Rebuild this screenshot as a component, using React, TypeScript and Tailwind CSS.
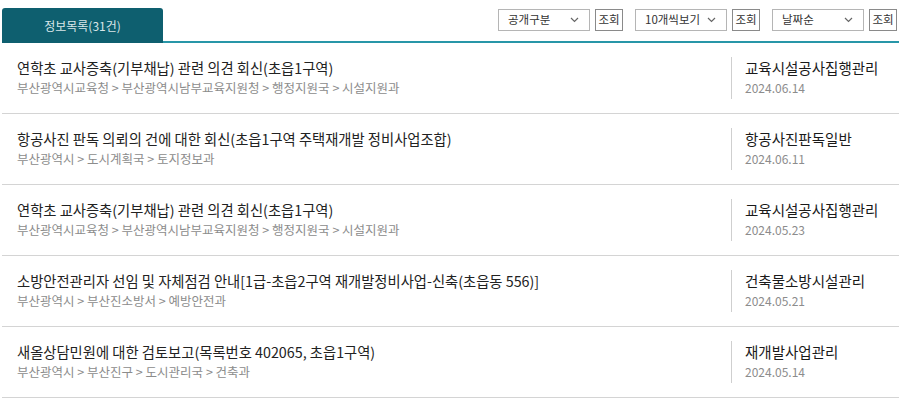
import React from "react";

const rows = [
  { t: "연학초 교사증축(기부채납) 관련 의견 회신(초읍1구역)", p: "부산광역시교육청 > 부산광역시남부교육지원청 > 행정지원국 > 시설지원과", c: "교육시설공사집행관리", d: "2024.06.14" },
  { t: "항공사진 판독 의뢰의 건에 대한 회신(초읍1구역 주택재개발 정비사업조합)", p: "부산광역시 > 도시계획국 > 토지정보과", c: "항공사진판독일반", d: "2024.06.11" },
  { t: "연학초 교사증축(기부채납) 관련 의견 회신(초읍1구역)", p: "부산광역시교육청 > 부산광역시남부교육지원청 > 행정지원국 > 시설지원과", c: "교육시설공사집행관리", d: "2024.05.23" },
  { t: "소방안전관리자 선임 및 자체점검 안내[1급-초읍2구역 재개발정비사업-신축(초읍동 556)]", p: "부산광역시 > 부산진소방서 > 예방안전과", c: "건축물소방시설관리", d: "2024.05.21" },
  { t: "새올상담민원에 대한 검토보고(목록번호 402065, 초읍1구역)", p: "부산광역시 > 부산진구 > 도시관리국 > 건축과", c: "재개발사업관리", d: "2024.05.14" },
];

function Chevron() {
  return (
    <svg width="9" height="6" viewBox="0 0 9 6" fill="none">
      <path d="M1 1l3.5 3.5L8 1" stroke="#666" strokeWidth="1.2" />
    </svg>
  );
}

function SelectGroup({ label }: { label: string }) {
  return (
    <div className="flex items-center gap-[5px]">
      <div className="w-[92px] h-[22px] border border-[#b5b5b5] flex items-center justify-between pl-[9px] pr-[10px] text-[11.5px] text-[#333]">
        <span>{label}</span>
        <Chevron />
      </div>
      <div className="w-[28px] h-[22px] border border-[#8a8a8a] flex items-center justify-center text-[11.5px] text-[#333]">
        조회
      </div>
    </div>
  );
}

export default function App() {
  return (
    <div
      className="w-[902px] h-[404px] bg-white pl-[2px] pr-[3px] overflow-hidden"
      style={{ fontFamily: '"Noto Sans CJK KR", "Noto Sans", sans-serif' }}
    >
      <div className="h-[43px] border-b-[2px] border-[#2896a8] flex items-start justify-between">
        <div className="mt-[8px] w-[161px] h-[35px] bg-[#0e5f6f] rounded-t-[3px] flex items-center justify-center text-[12px] text-[#d9e6e9] relative z-10">
          정보목록(31건)
        </div>
        <div className="mt-[9px] flex items-center gap-[12px] pr-[2px]">
          <SelectGroup label="공개구분" />
          <SelectGroup label="10개씩보기" />
          <SelectGroup label="날짜순" />
        </div>
      </div>
      {rows.map((r, i) => (
        <div key={i} className="h-[71px] border-b border-[#d4d4d4] flex items-start">
          <div className="flex-1 pl-[15px] pt-[15px]">
            <div className="text-[14.3px] leading-[20px] text-[#222]">{r.t}</div>
            <div className="mt-[1px] text-[12.5px] leading-[18px] text-[#8c8c8c]">{r.p}</div>
          </div>
          <div className="w-[168px] mt-[14px] h-[42px] border-l border-[#cfcfcf] pl-[13px] pt-[1px]">
            <div className="text-[14.5px] leading-[20px] text-[#1a1a1a]">{r.c}</div>
            <div className="mt-[1px] text-[12px] leading-[18px] text-[#8c8c8c]">{r.d}</div>
          </div>
        </div>
      ))}
    </div>
  );
}
